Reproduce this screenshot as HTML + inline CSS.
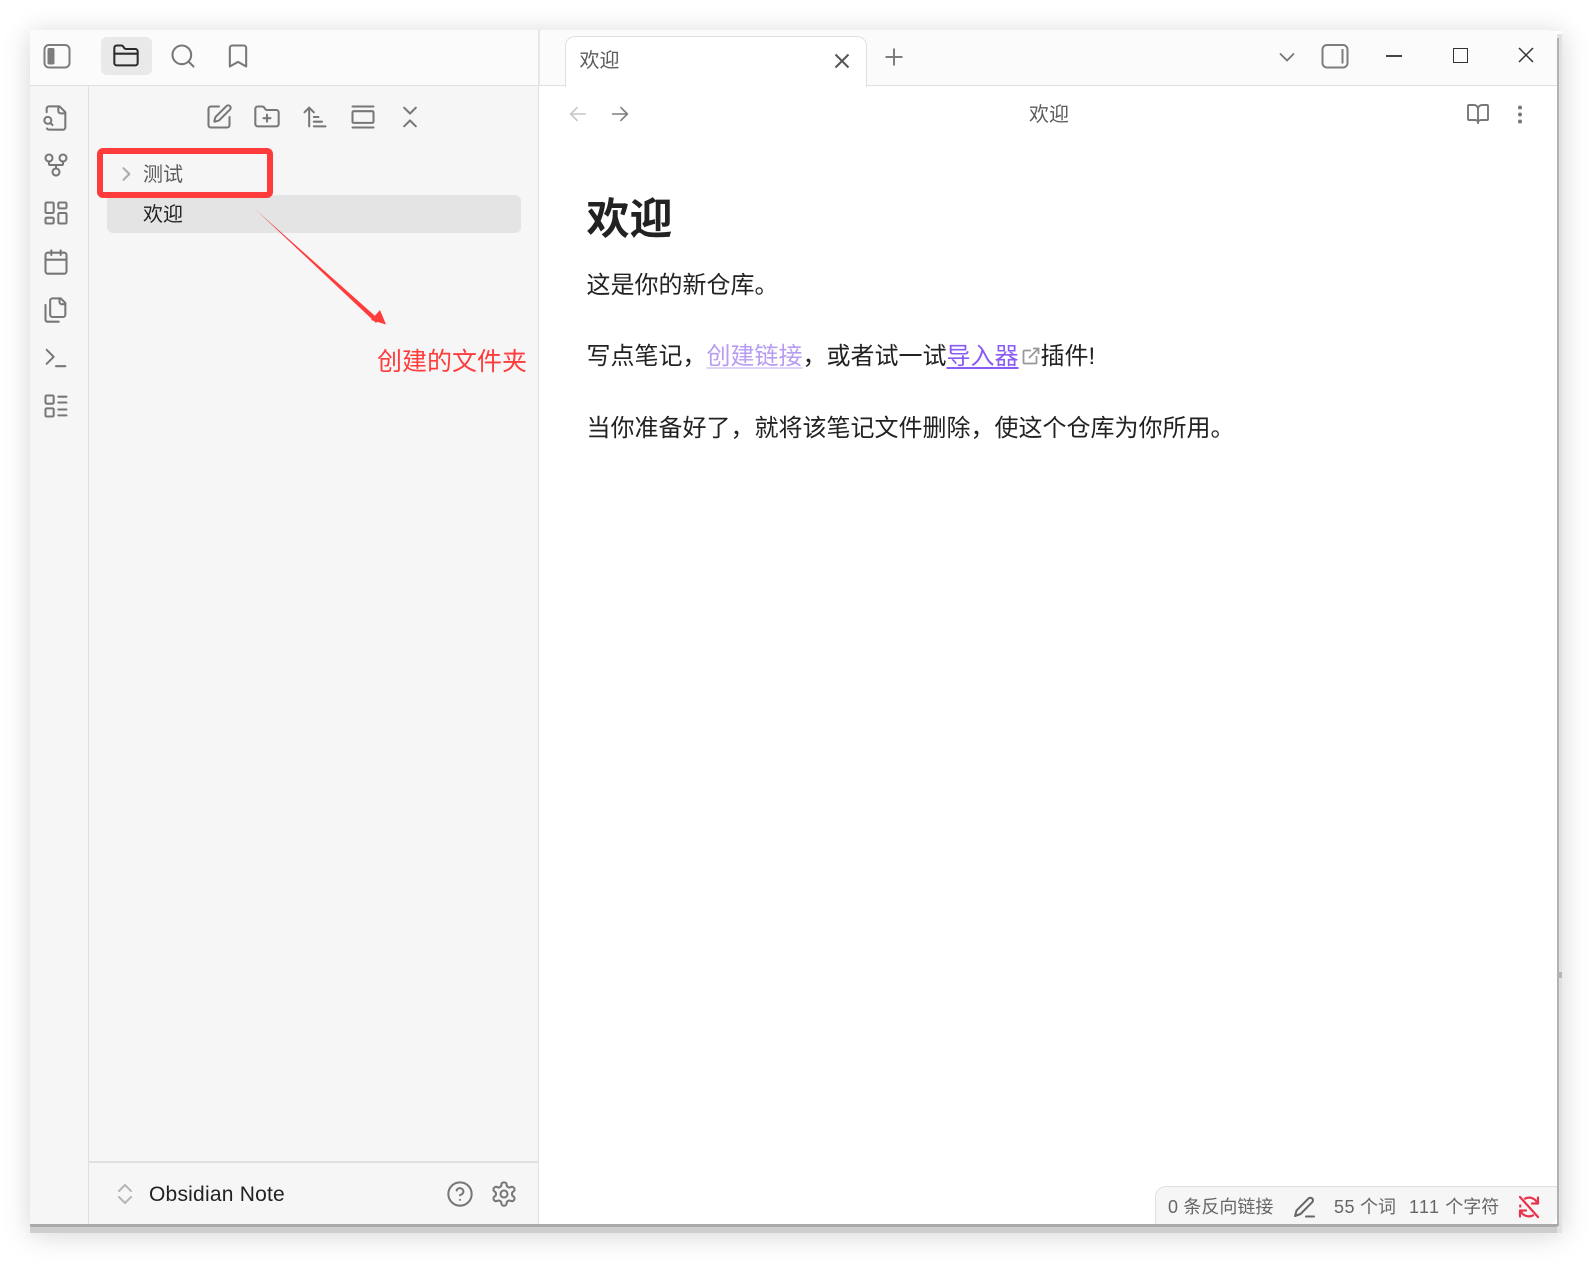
<!DOCTYPE html>
<html lang="zh">
<head>
<meta charset="utf-8">
<title>欢迎</title>
<style>
html,body{margin:0;padding:0;background:#fff;}
body{position:relative;width:1592px;height:1263px;overflow:hidden;font-family:"Liberation Sans","Noto Sans CJK SC",sans-serif;}
.abs,.t,svg.i{position:absolute;}
.t{white-space:nowrap;line-height:1;}
svg.i{fill:none;stroke:#777;stroke-width:1.75;stroke-linecap:round;stroke-linejoin:round;width:28px;height:28px;}
</style>
</head>
<body>
<!-- shadows -->
<div class="abs" style="left:30px;top:31px;width:1532px;height:1202px;box-shadow:0 2px 26px rgba(0,0,0,.17);"></div>
<div class="abs" style="left:30px;top:1224px;width:1532px;height:9px;background:#cecece;"></div>
<div class="abs" style="left:1557px;top:34px;width:5px;height:1199px;background:#e2e2e2;"></div>
<div class="abs" style="left:1557px;top:38px;width:2px;height:1188px;background:#b2b2b2;"></div>
<div class="abs" style="left:1557px;top:972px;width:5px;height:6px;background:#b5b5b5;"></div>
<div class="abs" style="left:30px;top:1224px;width:1529px;height:3px;background:#aaa;border-radius:0 0 8px 3px;"></div>

<!-- window -->
<div class="abs" style="left:30px;top:30px;width:1527px;height:1194px;background:#fff;border-radius:0 10px 9px 2px;overflow:hidden;">
  <div class="abs" style="left:0;top:0;width:1527px;height:56px;background:#fbfbfb;border-bottom:1.5px solid #e0e0e0;box-sizing:border-box;"></div>
  <div class="abs" style="left:0;top:56px;width:59px;height:1138px;background:#f6f6f6;border-right:1.5px solid #e0e0e0;box-sizing:border-box;"></div>
  <div class="abs" style="left:59px;top:56px;width:449px;height:1138px;background:#f6f6f6;border-right:1.5px solid #e0e0e0;"></div>
  <div class="abs" style="left:508px;top:0;width:1.5px;height:56px;background:#e6e6e6;"></div>
  <div class="abs" style="left:59px;top:1131px;width:449px;height:1.5px;background:#e0e0e0;"></div>
  <!-- active folder tab -->
  <div class="abs" style="left:71px;top:7px;width:51px;height:38px;background:#e9e9e9;border-radius:6px;"></div>
  <!-- active file -->
  <div class="abs" style="left:77px;top:165px;width:414px;height:38px;background:#e4e4e4;border-radius:6px;"></div>
  <!-- tab -->
  <div class="abs" style="left:535px;top:6px;width:302px;height:51px;background:#fff;border:1.5px solid #e0e0e0;border-bottom:none;border-radius:10px 10px 0 0;box-sizing:border-box;"></div>
  <div class="abs" style="left:537px;top:55px;width:298px;height:3px;background:#fff;"></div>
  <!-- status bar -->
  <div class="abs" style="left:1125px;top:1156px;width:402px;height:38px;background:#f6f6f6;border:1.5px solid #e0e0e0;border-right:none;border-bottom:none;border-radius:11px 0 0 0;box-sizing:border-box;"></div>
</div>

<!-- titlebar icons -->
<svg class="abs" style="left:43px;top:43px;" width="28" height="26" viewBox="0 0 28 26" fill="none"><rect x="1.5" y="2" width="25" height="22.5" rx="4.5" stroke="#7d7d7d" stroke-width="2"/><rect x="4.5" y="5" width="7" height="16.5" rx="1.5" fill="#7d7d7d"/></svg>
<svg class="i" style="left:112px;top:42px;stroke:#2b2b2b;" viewBox="0 0 24 24"><path d="M20 20a2 2 0 0 0 2-2V8a2 2 0 0 0-2-2h-7.9a2 2 0 0 1-1.69-.9L9.6 3.9A2 2 0 0 0 7.93 3H4a2 2 0 0 0-2 2v13a2 2 0 0 0 2 2Z"/><path d="M2 10h20"/></svg>
<svg class="i" style="left:169px;top:42px;" viewBox="0 0 24 24"><circle cx="11" cy="11" r="8"/><path d="m21 21-4.3-4.3"/></svg>
<svg class="i" style="left:223.5px;top:42px;" viewBox="0 0 24 24"><path d="m19 21-7-4-7 4V5a2 2 0 0 1 2-2h10a2 2 0 0 1 2 2v16z"/></svg>

<!-- ribbon -->
<svg class="i" style="left:42px;top:103.5px;" viewBox="0 0 24 24"><path d="M14 2v4a2 2 0 0 0 2 2h4"/><path d="M4.3 21a2 2 0 0 0 1.7 1H18a2 2 0 0 0 2-2V7l-5-5H6a2 2 0 0 0-2 2v3"/><path d="m9 18-1.5-1.5"/><circle cx="5" cy="14" r="3"/></svg>
<svg class="i" style="left:41.5px;top:151px;" viewBox="0 0 24 24"><circle cx="12" cy="18" r="3"/><circle cx="6" cy="6" r="3"/><circle cx="18" cy="6" r="3"/><path d="M18 9v2c0 .6-.4 1-1 1H7c-.6 0-1-.4-1-1V9"/><path d="M12 12v3"/></svg>
<svg class="i" style="left:42px;top:199px;" viewBox="0 0 24 24"><rect x="3" y="3" width="7" height="9" rx="1"/><rect x="14" y="3" width="7" height="5" rx="1"/><rect x="14" y="12" width="7" height="9" rx="1"/><rect x="3" y="16" width="7" height="5" rx="1"/></svg>
<svg class="i" style="left:42px;top:247.5px;" viewBox="0 0 24 24"><path d="M8 2v4"/><path d="M16 2v4"/><rect x="3" y="4" width="18" height="18" rx="2"/><path d="M3 10h18"/></svg>
<svg class="i" style="left:42px;top:295.5px;" viewBox="0 0 24 24"><path d="M20 7h-3a2 2 0 0 1-2-2V2"/><path d="M9 18a2 2 0 0 1-2-2V4a2 2 0 0 1 2-2h7l4 4v10a2 2 0 0 1-2 2Z"/><path d="M3 7.6v12.8A1.6 1.6 0 0 0 4.6 22h9.8"/></svg>
<svg class="i" style="left:42px;top:343.5px;" viewBox="0 0 24 24"><path d="M4 17l6-6-6-6"/><path d="M12 19h8"/></svg>
<svg class="i" style="left:42px;top:391.5px;" viewBox="0 0 24 24"><rect x="3" y="3" width="7" height="7" rx="1"/><rect x="3" y="14" width="7" height="7" rx="1"/><path d="M14 4h7M14 9h7M14 15h7M14 20h7"/></svg>

<!-- file toolbar -->
<svg class="i" style="left:205px;top:103px;" viewBox="0 0 24 24"><path d="M12 3H5a2 2 0 0 0-2 2v14a2 2 0 0 0 2 2h14a2 2 0 0 0 2-2v-7"/><path d="M18.375 2.625a1 1 0 0 1 3 3l-9.013 9.014a2 2 0 0 1-.853.505l-2.873.84a.5.5 0 0 1-.62-.62l.84-2.873a2 2 0 0 1 .506-.852z"/></svg>
<svg class="i" style="left:253px;top:103px;" viewBox="0 0 24 24"><path d="M12 10v6"/><path d="M9 13h6"/><path d="M20 20a2 2 0 0 0 2-2V8a2 2 0 0 0-2-2h-7.9a2 2 0 0 1-1.69-.9L9.6 3.9A2 2 0 0 0 7.93 3H4a2 2 0 0 0-2 2v13a2 2 0 0 0 2 2Z"/></svg>
<svg class="i" style="left:301px;top:103px;" viewBox="0 0 24 24"><path d="m3 8 4-4 4 4"/><path d="M7 4v16"/><path d="M11 12h4"/><path d="M11 16h7"/><path d="M11 20h10"/></svg>
<svg class="i" style="left:349px;top:103px;" viewBox="0 0 24 24"><path d="M3 3h18M3 21h18"/><rect x="3" y="7" width="18" height="10" rx="1"/></svg>
<svg class="i" style="left:396px;top:103px;" viewBox="0 0 24 24"><path d="m7 20 5-5 5 5"/><path d="m7 4 5 5 5-5"/></svg>

<!-- file tree -->
<svg class="i" style="left:116px;top:164px;width:20px;height:20px;stroke:#aaa;stroke-width:2.4;" viewBox="0 0 24 24"><path d="m9 5 7 7-7 7"/></svg>
<div class="t" style="left:143px;top:165px;font-size:20px;color:#5c5c5c;">测试</div>
<div class="t" style="left:143px;top:205px;font-size:20px;color:#222;">欢迎</div>

<!-- annotations -->
<div class="abs" style="left:96.5px;top:147.5px;width:176px;height:50px;border:6px solid #ff3b3b;border-radius:6px;box-sizing:border-box;"></div>
<svg class="abs" style="left:0;top:0;" width="600" height="400"><path d="M255.5 209.5 L379 319.5 L376 323 Z" fill="#ff3b3b"/><path d="M386 324.5 L371 320 L380 310 Z" fill="#ff3b3b"/></svg>
<div class="t" style="left:377px;top:350px;font-size:25px;color:#ff3b3b;">创建的文件夹</div>

<!-- tab bar -->
<div class="t" style="left:579.5px;top:51px;font-size:20px;color:#5c5c5c;">欢迎</div>
<svg class="abs" style="left:834px;top:53px;" width="16" height="16" fill="none"><path d="M1.5 1.5l13 13M14.5 1.5l-13 13" stroke="#555" stroke-width="2"/></svg>
<svg class="abs" style="left:885px;top:48px;" width="18" height="18" fill="none"><path d="M9 0.5v17M0.5 9h17" stroke="#7d7d7d" stroke-width="2"/></svg>
<svg class="abs" style="left:1279px;top:52px;" width="16" height="11" fill="none"><path d="M1 1.5l7 7 7-7" stroke="#777" stroke-width="1.8"/></svg>
<svg class="abs" style="left:1321px;top:43px;" width="28" height="26" viewBox="0 0 28 26" fill="none"><rect x="1.5" y="2" width="25" height="22.5" rx="4.5" stroke="#7d7d7d" stroke-width="2"/><rect x="20.5" y="6" width="2" height="14.5" fill="#7d7d7d"/></svg>
<div class="abs" style="left:1386px;top:55px;width:16px;height:1.5px;background:#444;"></div>
<div class="abs" style="left:1453px;top:48px;width:15px;height:15px;border:1.5px solid #333;box-sizing:border-box;"></div>
<svg class="abs" style="left:1518px;top:47px;" width="16" height="16" fill="none"><path d="M1 1l14 14M15 1 1 15" stroke="#333" stroke-width="1.5"/></svg>

<!-- view header -->
<svg class="i" style="left:567px;top:103px;stroke:#c6c6c6;width:22px;height:22px;" viewBox="0 0 24 24"><path d="M20 12H4"/><path d="m11 5-7 7 7 7"/></svg>
<svg class="i" style="left:609px;top:103px;stroke:#7d7d7d;width:22px;height:22px;" viewBox="0 0 24 24"><path d="M4 12h16"/><path d="m13 5 7 7-7 7"/></svg>
<div class="t" style="left:1029px;top:105px;font-size:20px;color:#5c5c5c;">欢迎</div>
<svg class="i" style="left:1466px;top:102px;stroke:#777;width:24px;height:24px;stroke-width:1.9;" viewBox="0 0 24 24"><path d="M12 7v14"/><path d="M3 18a1 1 0 0 1-1-1V4a1 1 0 0 1 1-1h5a4 4 0 0 1 4 4 4 4 0 0 1 4-4h5a1 1 0 0 1 1 1v13a1 1 0 0 1-1 1h-6a3 3 0 0 0-3 3 3 3 0 0 0-3-3z"/></svg>
<svg class="abs" style="left:1515px;top:103px;" width="10" height="22"><circle cx="5" cy="4.5" r="2" fill="#777"/><circle cx="5" cy="11.5" r="2" fill="#777"/><circle cx="5" cy="18.5" r="2" fill="#777"/></svg>

<!-- content -->
<div class="t" style="left:586.5px;top:199px;font-size:43px;font-weight:700;color:#222;">欢迎</div>
<div class="t" style="left:586.5px;top:274px;font-size:24px;color:#222;">这是你的新仓库。</div>
<div class="t" style="left:586.5px;top:344.5px;font-size:24px;color:#222;">写点笔记，</div>
<div class="t" style="left:706.5px;top:344.5px;font-size:24px;color:#b79cf2;text-decoration:underline;text-decoration-color:#e0d4fa;text-underline-offset:3px;">创建链接</div>
<div class="t" style="left:802.5px;top:344.5px;font-size:24px;color:#222;">，或者试一试</div>
<div class="t" style="left:946.5px;top:344.5px;font-size:24px;color:#8a5cf5;text-decoration:underline;text-underline-offset:3px;">导入器</div>
<svg class="abs" style="left:1021.5px;top:347px;" width="18" height="18" viewBox="0 0 18 18" fill="none" stroke="#999" stroke-width="1.8"><path d="M9 3.5H2.5a1 1 0 0 0-1 1v11a1 1 0 0 0 1 1h11a1 1 0 0 0 1-1V9"/><path d="M7 11 16 2M11 1.5h5.5V7"/></svg>
<div class="t" style="left:1040.5px;top:344.5px;font-size:24px;color:#222;">插件!</div>
<div class="t" style="left:586.5px;top:416.5px;font-size:24px;color:#222;">当你准备好了，就将该笔记文件删除，使这个仓库为你所用。</div>

<!-- sidebar footer -->
<svg class="i" style="left:113px;top:1182px;width:24px;height:24px;stroke:#b5b5b5;stroke-width:2;" viewBox="0 0 24 24"><path d="m6 9 6-6 6 6"/><path d="m6 15 6 6 6-6"/></svg>
<div class="t" style="left:149px;top:1184px;font-size:21px;letter-spacing:.22px;color:#222;">Obsidian Note</div>
<svg class="i" style="left:446px;top:1180px;" viewBox="0 0 24 24"><circle cx="12" cy="12" r="10"/><path d="M9.09 9a3 3 0 0 1 5.83 1c0 2-3 3-3 3"/><path d="M12 17h.01"/></svg>
<svg class="i" style="left:490px;top:1180px;" viewBox="0 0 24 24"><path d="M12.22 2h-.44a2 2 0 0 0-2 2v.18a2 2 0 0 1-1 1.73l-.43.25a2 2 0 0 1-2 0l-.15-.08a2 2 0 0 0-2.73.73l-.22.38a2 2 0 0 0 .73 2.73l.15.1a2 2 0 0 1 1 1.72v.51a2 2 0 0 1-1 1.74l-.15.09a2 2 0 0 0-.73 2.73l.22.38a2 2 0 0 0 2.73.73l.15-.08a2 2 0 0 1 2 0l.43.25a2 2 0 0 1 1 1.73V20a2 2 0 0 0 2 2h.44a2 2 0 0 0 2-2v-.18a2 2 0 0 1 1-1.73l.43-.25a2 2 0 0 1 2 0l.15.08a2 2 0 0 0 2.73-.73l.22-.39a2 2 0 0 0-.73-2.73l-.15-.08a2 2 0 0 1-1-1.74v-.5a2 2 0 0 1 1-1.74l.15-.09a2 2 0 0 0 .73-2.73l-.22-.38a2 2 0 0 0-2.73-.73l-.15.08a2 2 0 0 1-2 0l-.43-.25a2 2 0 0 1-1-1.73V4a2 2 0 0 0-2-2z"/><circle cx="12" cy="12" r="3"/></svg>

<!-- status bar content -->
<div class="t" style="left:1168px;top:1198px;font-size:18px;color:#666;"><span style="letter-spacing:.4px;">0</span> 条反向链接</div>
<svg class="abs" style="left:1293px;top:1196px;" width="24" height="22" viewBox="0 0 24 22" fill="none" stroke="#666" stroke-width="2" stroke-linecap="round" stroke-linejoin="round"><path d="M15.5 2.5a2.6 2.6 0 0 1 3.7 3.7L7.5 18 2 20l1.6-5.6Z"/><path d="M13 20.5h8"/></svg>
<div class="t" style="left:1334px;top:1198px;font-size:18px;color:#666;"><span style="letter-spacing:.5px;">55</span> 个词</div>
<div class="t" style="left:1409px;top:1198px;font-size:18px;color:#666;"><span style="letter-spacing:1.3px;">111</span> 个字符</div>
<svg class="abs" style="left:1517px;top:1195px;" width="24" height="24" viewBox="0 0 24 24" fill="none" stroke="#e8334e" stroke-width="2.2" stroke-linecap="round" stroke-linejoin="round"><path d="M3 2l18 20"/><path d="M20.5 8.5A9 9 0 0 0 8 3.6"/><path d="M21 2.5v6h-6"/><path d="M3.5 15.5A9 9 0 0 0 16 20.4"/><path d="M3 21.5v-6h6"/><path d="M3.2 10.5v1"/></svg>
</body>
</html>
